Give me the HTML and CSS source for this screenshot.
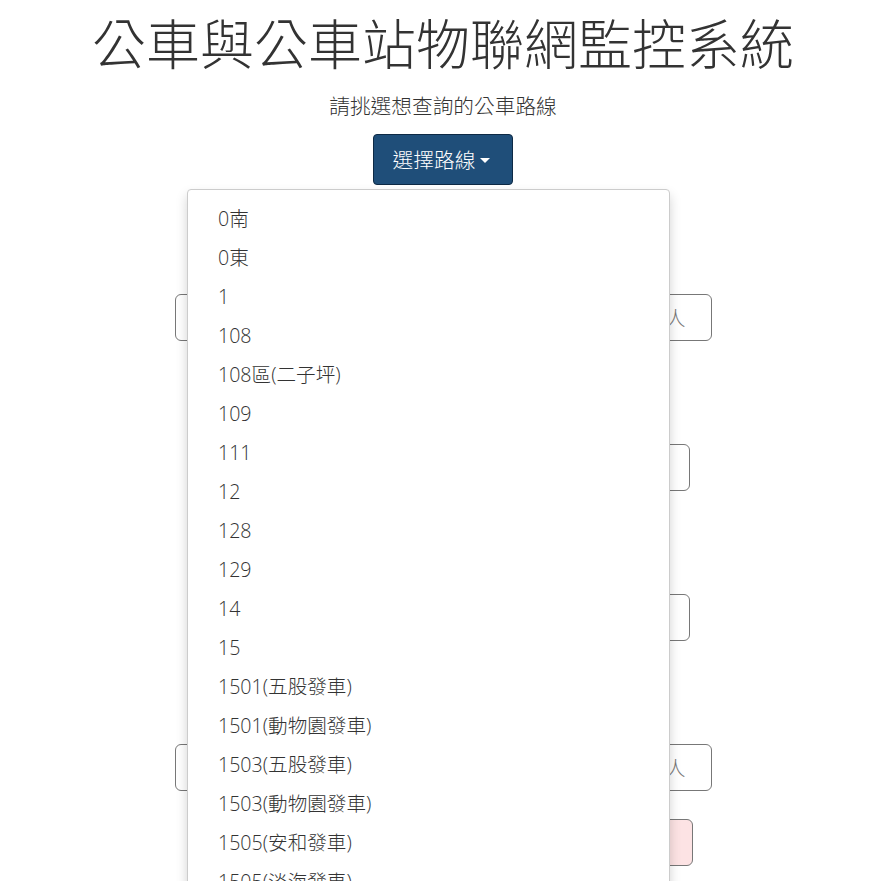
FILE: index.html
```html
<!DOCTYPE html>
<html lang="zh-Hant">
<head>
<meta charset="utf-8">
<title>公車與公車站物聯網監控系統</title>
<link rel="stylesheet" href="styles.css">
</head>
<body>
<div class="page">
  <h1 class="title">公車與公車站物聯網監控系統</h1>
  <p class="subtitle">請挑選想查詢的公車路線</p>
  <div class="dropdown">
    <button class="btn-route" type="button">選擇路線<span class="caret"></span></button>
  </div>
  <div class="form">
    <div class="field wide"><span class="ph">人</span></div>
    <div class="field mid"></div>
    <div class="field mid"></div>
    <div class="field wide spaced"><span class="ph">人</span></div>
    <div class="field pink"></div>
  </div>
  <ul class="menu">
    <li>0南</li>
    <li>0東</li>
    <li>1</li>
    <li>108</li>
    <li>108區(二子坪)</li>
    <li>109</li>
    <li>111</li>
    <li>12</li>
    <li>128</li>
    <li>129</li>
    <li>14</li>
    <li>15</li>
    <li>1501(五股發車)</li>
    <li>1501(動物園發車)</li>
    <li>1503(五股發車)</li>
    <li>1503(動物園發車)</li>
    <li>1505(安和發車)</li>
    <li>1505(淡海發車)</li>
    <li>16</li>
  </ul>
</div>
</body>
</html>
```

FILE: styles.css
```css
html, body {
  margin: 0;
  padding: 0;
  overflow: hidden;
  height: 881px;
  background: #fff;
}
body {
  font-family: "Noto Sans CJK TC", "Noto Sans", sans-serif;
  color: #333;
}
.page {
  position: relative;
  display: flex;
  flex-direction: column;
  align-items: center;
  padding-left: 7px;
}
.title {
  margin: 7px 0 0;
  font-size: 54px;
  line-height: 70px;
  font-weight: 300;
  color: #333;
  white-space: nowrap;
}
.subtitle {
  margin: 13px 0 0;
  font-size: 20.7px;
  line-height: 30px;
  font-weight: 300;
  color: #333;
}
.dropdown {
  margin-top: 14px;
}
.btn-route {
  display: flex;
  align-items: center;
  justify-content: center;
  width: 140px;
  height: 51px;
  padding: 0 3px 2px 0;
  background: #1f4e79;
  border: 1px solid #0e2a45;
  border-radius: 4px;
  color: #fff;
  font-family: "Noto Sans CJK TC", sans-serif;
  font-size: 20.7px;
  font-weight: 300;
}
.caret {
  display: inline-block;
  width: 0;
  height: 0;
  margin-left: 5px;
  margin-top: 3px;
  border-left: 5px solid transparent;
  border-right: 5px solid transparent;
  border-top: 5px solid #fff;
}
.form {
  display: flex;
  flex-direction: column;
  align-items: center;
  margin-top: 109px;
}
.field {
  box-sizing: border-box;
  height: 47px;
  border: 1px solid #777;
  border-radius: 6px;
  display: flex;
  align-items: center;
  justify-content: flex-end;
  padding-right: 25px;
  font-size: 20px;
  color: #777;
  font-weight: 300;
}
.field.wide {
  width: 537px;
}
.field.wide.spaced {
  margin-top: 103px;
}
.field.mid {
  width: 494px;
  margin-top: 103px;
}
.field.pink {
  width: 500px;
  margin-top: 28px;
  background: #fde3e4;
}
.menu {
  position: absolute;
  top: 189px;
  left: 187px;
  width: 483px;
  box-sizing: border-box;
  margin: 0;
  padding: 9px 0 8px;
  list-style: none;
  background: #fff;
  border: 1px solid #ccc;
  border-radius: 4px;
  box-shadow: 0 6px 12px rgba(0, 0, 0, 0.175);
}
.menu li {
  padding: 0 30px;
  font-family: "Open Sans", "Noto Sans CJK TC", sans-serif;
  font-size: 19.6px;
  line-height: 39px;
  font-weight: 300;
  color: #333;
  white-space: nowrap;
}
```
